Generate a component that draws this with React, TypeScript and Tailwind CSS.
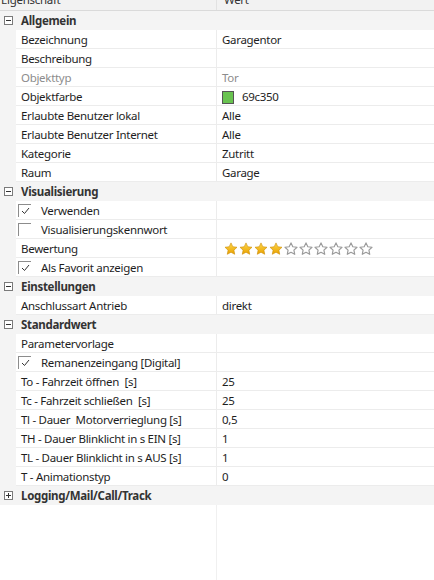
import React from "react";

type Row =
  | { kind: "group"; label: string; open: boolean }
  | { kind: "prop"; label: string; value?: React.ReactNode; muted?: boolean; check?: boolean };

const Stars = () => (
  <div className="ml-[2px] flex items-center gap-[1px]">
    {Array.from({ length: 10 }).map((_, i) => (
      <svg key={i} width="14" height="14" viewBox="0 0 24 24">
        <defs>
          <linearGradient id={`g${i}`} x1="0" y1="0" x2="0" y2="1">
            <stop offset="0" stopColor="#ffd84a" />
            <stop offset="1" stopColor="#e8a000" />
          </linearGradient>
        </defs>
        <path
          d="M12 1.5l3.1 6.6 7.2.9-5.3 5 1.4 7.1L12 17.6l-6.4 3.5 1.4-7.1-5.3-5 7.2-.9z"
          fill={i < 4 ? `url(#g${i})` : "#ffffff"}
          stroke={i < 4 ? "#c98a00" : "#9a9a9a"}
          strokeWidth={i < 4 ? 1 : 2}
          strokeLinejoin="round"
        />
      </svg>
    ))}
  </div>
);

const Check = ({ on }: { on: boolean }) => (
  <span className="flex h-[13px] w-[13px] items-center justify-center border-l border-t border-[#8c8c8c]">
    {on && (
      <svg width="9" height="8" viewBox="0 0 9 8">
        <path d="M1 4l2.5 2.5L8 1" fill="none" stroke="#333" strokeWidth="1" />
      </svg>
    )}
  </span>
);

const Toggle = ({ open }: { open: boolean }) => (
  <span className="flex h-[9px] w-[9px] items-center justify-center border border-[#7a7a7a] bg-white">
    <span className="relative block h-px w-[5px] bg-[#333]">
      {!open && <span className="absolute left-[2px] top-[-2px] block h-[5px] w-px bg-[#333]" />}
    </span>
  </span>
);

const rows: Row[] = [
  { kind: "group", label: "Allgemein", open: true },
  { kind: "prop", label: "Bezeichnung", value: "Garagentor" },
  { kind: "prop", label: "Beschreibung" },
  { kind: "prop", label: "Objekttyp", value: "Tor", muted: true },
  {
    kind: "prop",
    label: "Objektfarbe",
    value: (
      <span className="flex items-center gap-[8px]">
        <span className="block h-[13px] w-[12px] border border-[#555] bg-[#69c350]" />
        69c350
      </span>
    ),
  },
  { kind: "prop", label: "Erlaubte Benutzer lokal", value: "Alle" },
  { kind: "prop", label: "Erlaubte Benutzer Internet", value: "Alle" },
  { kind: "prop", label: "Kategorie", value: "Zutritt" },
  { kind: "prop", label: "Raum", value: "Garage" },
  { kind: "group", label: "Visualisierung", open: true },
  { kind: "prop", label: "Verwenden", check: true },
  { kind: "prop", label: "Visualisierungskennwort", check: false },
  { kind: "prop", label: "Bewertung", value: <Stars /> },
  { kind: "prop", label: "Als Favorit anzeigen", check: true },
  { kind: "group", label: "Einstellungen", open: true },
  { kind: "prop", label: "Anschlussart Antrieb", value: "direkt" },
  { kind: "group", label: "Standardwert", open: true },
  { kind: "prop", label: "Parametervorlage" },
  { kind: "prop", label: "Remanenzeingang [Digital]", check: true },
  { kind: "prop", label: "To - Fahrzeit öffnen\u00a0 [s]", value: "25" },
  { kind: "prop", label: "Tc - Fahrzeit schließen\u00a0 [s]", value: "25" },
  { kind: "prop", label: "Tl - Dauer\u00a0 Motorverrieglung [s]", value: "0,5" },
  { kind: "prop", label: "TH - Dauer Blinklicht in s EIN [s]", value: "1" },
  { kind: "prop", label: "TL - Dauer Blinklicht in s AUS [s]", value: "1" },
  { kind: "prop", label: "T - Animationstyp", value: "0" },
  { kind: "group", label: "Logging/Mail/Call/Track", open: false },
];

export default function App() {
  return (
    <div
      className="h-[580px] w-[434px] overflow-hidden bg-white text-[11.5px] tracking-[-0.3px] text-[#1e1e1e]"
      style={{ fontFamily: '"Noto Sans", "Open Sans", sans-serif' }}
    >
      {/* header, scrolled partly out of view */}
      <div className="-mt-[10px] flex h-[21px] items-center border-b border-[#dadada] bg-[#f2f2f2] text-[#333]">
        <div className="w-[217px] border-r border-[#e2e2e2] pl-[1px] leading-[20px]">Eigenschaft</div>
        <div className="flex-1 pl-[7px] leading-[20px]">Wert</div>
      </div>

      {rows.map((r, i) =>
        r.kind === "group" ? (
          <div key={i} className="flex h-[19px] items-center bg-[#f4f4f4] font-bold text-[#333]">
            <div className="flex w-[16px] justify-center pl-[1px]">
              <Toggle open={r.open} />
            </div>
            <div className="pl-[5px] pt-[1px]">{r.label}</div>
          </div>
        ) : (
          <div key={i} className="flex h-[19px]">
            <div className="w-[16px] bg-[#f4f4f4]" />
            <div className="flex w-[201px] items-center border-b border-r border-[#ececec] pl-[5px] pt-[2px]">
              {r.check !== undefined ? (
                <span className="-ml-[3px] -mt-[1px] flex items-center gap-[10px]">
                  <Check on={r.check} />
                  <span className="pt-[1px]">{r.label}</span>
                </span>
              ) : (
                <span className={r.muted ? "text-[#8c8c8c]" : ""}>{r.label}</span>
              )}
            </div>
            <div
              className={`flex flex-1 items-center border-b border-[#ececec] pl-[5px] pt-[2px] ${
                r.muted ? "text-[#8c8c8c]" : ""
              }`}
            >
              {r.value}
            </div>
          </div>
        )
      )}

      <div className="flex h-[200px]">
        <div className="w-[217px] border-r border-[#f0f0f0]" />
      </div>
    </div>
  );
}
